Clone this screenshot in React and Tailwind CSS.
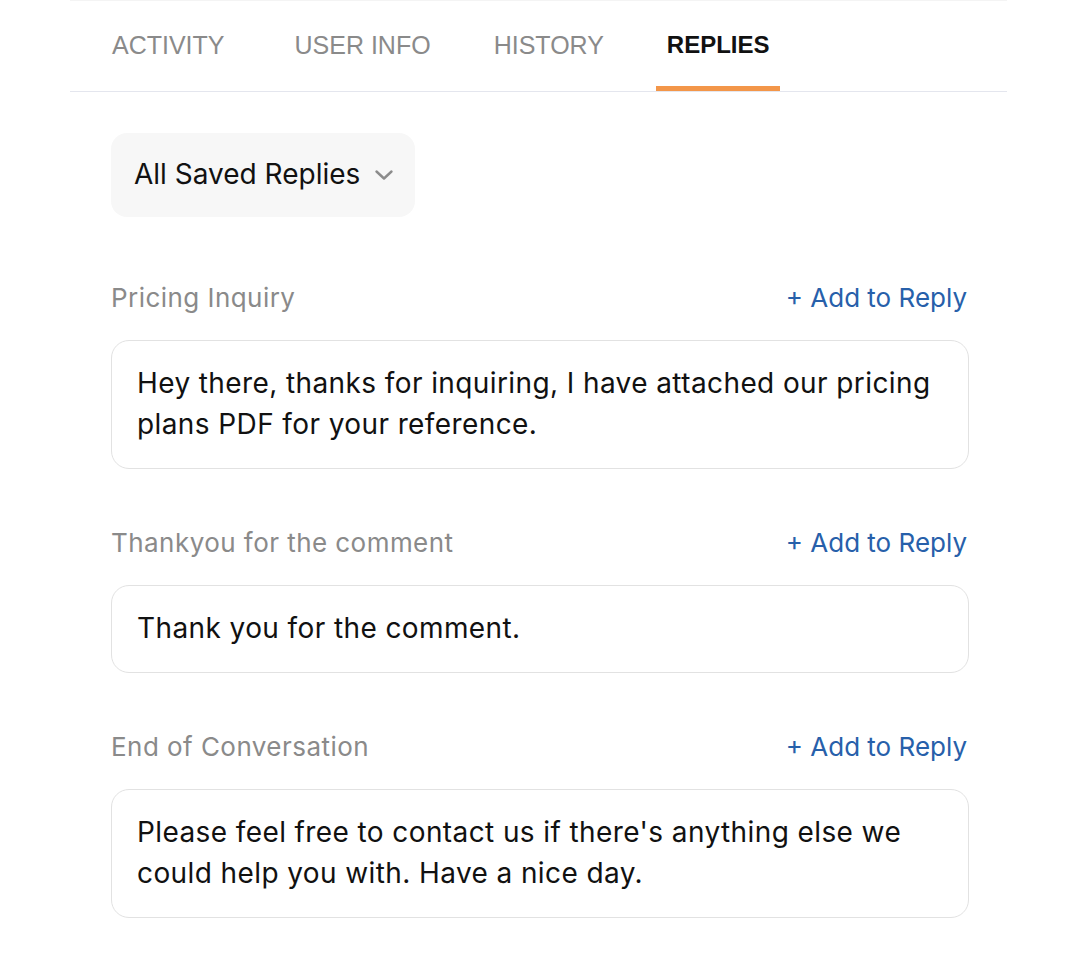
import React from "react";

const replies = [
  {
    title: "Pricing Inquiry",
    body: "Hey there, thanks for inquiring, I have attached our pricing plans PDF for your reference.",
  },
  { title: "Thankyou for the comment", body: "Thank you for the comment." },
  {
    title: "End of Conversation",
    body: "Please feel free to contact us if there's anything else we could help you with. Have a nice day.",
  },
];

const tabBase =
  "h-[90px] flex items-center pb-[2px] font-['Liberation_Sans',Arial,sans-serif] leading-none";

export default function App() {
  return (
    <div className="w-[1077px] h-[972px] bg-white overflow-hidden">
      <div className="mx-[70px] border-t border-[#f4f4f4]">
        <div className="flex items-end pl-[31px] border-b border-[#e4e6ee] h-[91px]">
          <div className={`${tabBase} px-[11px] text-[25px] text-[#8a8a8a]`}>ACTIVITY</div>
          <div className={`${tabBase} px-[11px] ml-[48px] text-[25px] text-[#8a8a8a]`}>USER INFO</div>
          <div className={`${tabBase} px-[11px] ml-[41px] text-[25px] text-[#8a8a8a]`}>HISTORY</div>
          <div className={`${tabBase} pl-[11px] pr-[10px] ml-[41px] relative text-[24px] font-bold text-[#111]`}>
            REPLIES
            <div className="absolute left-0 right-0 bottom-0 h-[5px] bg-[#f39649]" />
          </div>
        </div>

        <div className="pl-[41px] pr-[38px] pt-[41px] font-['Inter','Open_Sans',sans-serif]">
          <div className="inline-flex items-center gap-[14px] h-[84px] w-[304px] pl-[23px] pb-[2px] rounded-[16px] bg-[#f7f7f7] text-[28px] text-[#111]">
            <span>All Saved Replies</span>
            <svg width="20" height="12" viewBox="0 0 20 12" className="mt-[2px]">
              <path d="M2.5 2.5 L10 9.5 L17.5 2.5" fill="none" stroke="#8c8c8c" strokeWidth="2.4" strokeLinecap="round" strokeLinejoin="round" />
            </svg>
          </div>

          <div className="flex flex-col gap-[55px] mt-[62px]">
            {replies.map((r) => (
              <div key={r.title}>
                <div className="flex items-center justify-between h-[36px] mb-[25px]">
                  <span className="text-[26px] tracking-[0.45px] text-[#8a8a8a]">{r.title}</span>
                  <span className="text-[26px] text-[#2760aa] pr-[2px]">+ Add to Reply</span>
                </div>
                <div className="border-[1.5px] border-[#e2e2e2] rounded-[18px] pl-[25px] pr-[20px] pt-[22px] pb-[23px] text-[28px] tracking-[0.4px] leading-[41px] text-[#111]">
                  {r.body}
                </div>
              </div>
            ))}
          </div>
        </div>
      </div>
    </div>
  );
}
